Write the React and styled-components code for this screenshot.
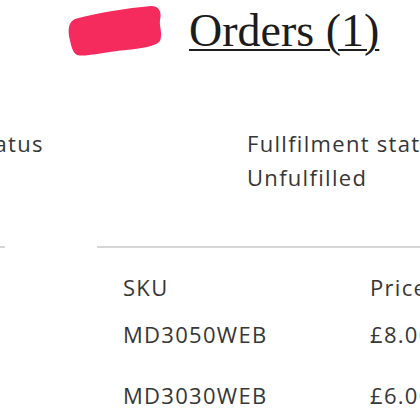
import React from 'react';
import styled, { createGlobalStyle } from 'styled-components';

const GlobalStyle = createGlobalStyle`
  html, body {
    margin: 0;
    padding: 0;
    background: #fff;
    overflow: hidden;
  }
`;

const Page = styled.div`
  width: 760px;
  margin-left: -133px;
  color: #363636;
  font-family: 'Open Sans', 'Liberation Sans', sans-serif;
  font-size: 22px;
  letter-spacing: 1.3px;
  line-height: 34px;
`;

const Header = styled.header`
  display: flex;
  align-items: center;
  gap: 26px;
  padding: 5px 0 0 200px;
  height: 52px;
`;

const Scribble = styled.svg`
  width: 96px;
  height: 52px;
  flex: none;
`;

const Title = styled.h1`
  margin: 0;
  font-family: 'Liberation Serif', 'Times New Roman', serif;
  font-weight: 400;
  font-size: 46px;
  line-height: 46px;
  letter-spacing: 0;
  color: #1c1c1c;
  text-decoration: underline;
  text-decoration-thickness: 2px;
  text-underline-offset: 3px;
`;

const StatusRow = styled.section`
  display: grid;
  grid-template-columns: 380px 1fr;
  margin-top: 69px;
`;

const Status = styled.div`
  display: flex;
  flex-direction: column;
`;

const Label = styled.span``;

const Value = styled.span``;

const Divider = styled.div`
  display: flex;
  gap: 92px;
  margin-top: 52px;
`;

const Rule = styled.hr`
  margin: 0;
  border: none;
  height: 2px;
  background: #d6d6d6;
  width: ${(p) => (p.$width ? `${p.$width}px` : 'auto')};
  flex: ${(p) => (p.$width ? 'none' : '1')};
`;

const Table = styled.div`
  display: grid;
  grid-template-columns: 247px 1fr;
  padding-left: 256px;
  padding-top: 22px;
`;

const Cell = styled.div`
  padding: ${(p) => (p.$head ? '0' : '13px 0 14px')};
  white-space: nowrap;
`;

const rows = [
  { sku: 'MD3050WEB', price: '£8.00' },
  { sku: 'MD3030WEB', price: '£6.00' },
];

export default function App() {
  return (
    <>
      <GlobalStyle />
      <Page>
        <Header>
          <Scribble viewBox="0 0 96 52">
            <path
              d="M8 14 C 30 8, 60 3, 84 1 C 92 1, 95 7, 93 15 C 92 22, 96 28, 93 36 C 89 42, 70 44, 50 46 C 32 48, 18 52, 10 50 C 5 47, 4 40, 2 31 C 1 23, 2 17, 8 14 Z"
              fill="#f52a5d"
            />
          </Scribble>
          <Title>Orders (1)</Title>
        </Header>
        <StatusRow>
          <Status>
            <Label>Payment status</Label>
          </Status>
          <Status>
            <Label>Fullfilment status</Label>
            <Value>Unfulfilled</Value>
          </Status>
        </StatusRow>
        <Divider>
          <Rule $width={138} />
          <Rule />
        </Divider>
        <Table>
          <Cell $head>SKU</Cell>
          <Cell $head>Price</Cell>
          {rows.map((r) => (
            <React.Fragment key={r.sku}>
              <Cell>{r.sku}</Cell>
              <Cell>{r.price}</Cell>
            </React.Fragment>
          ))}
        </Table>
      </Page>
    </>
  );
}
